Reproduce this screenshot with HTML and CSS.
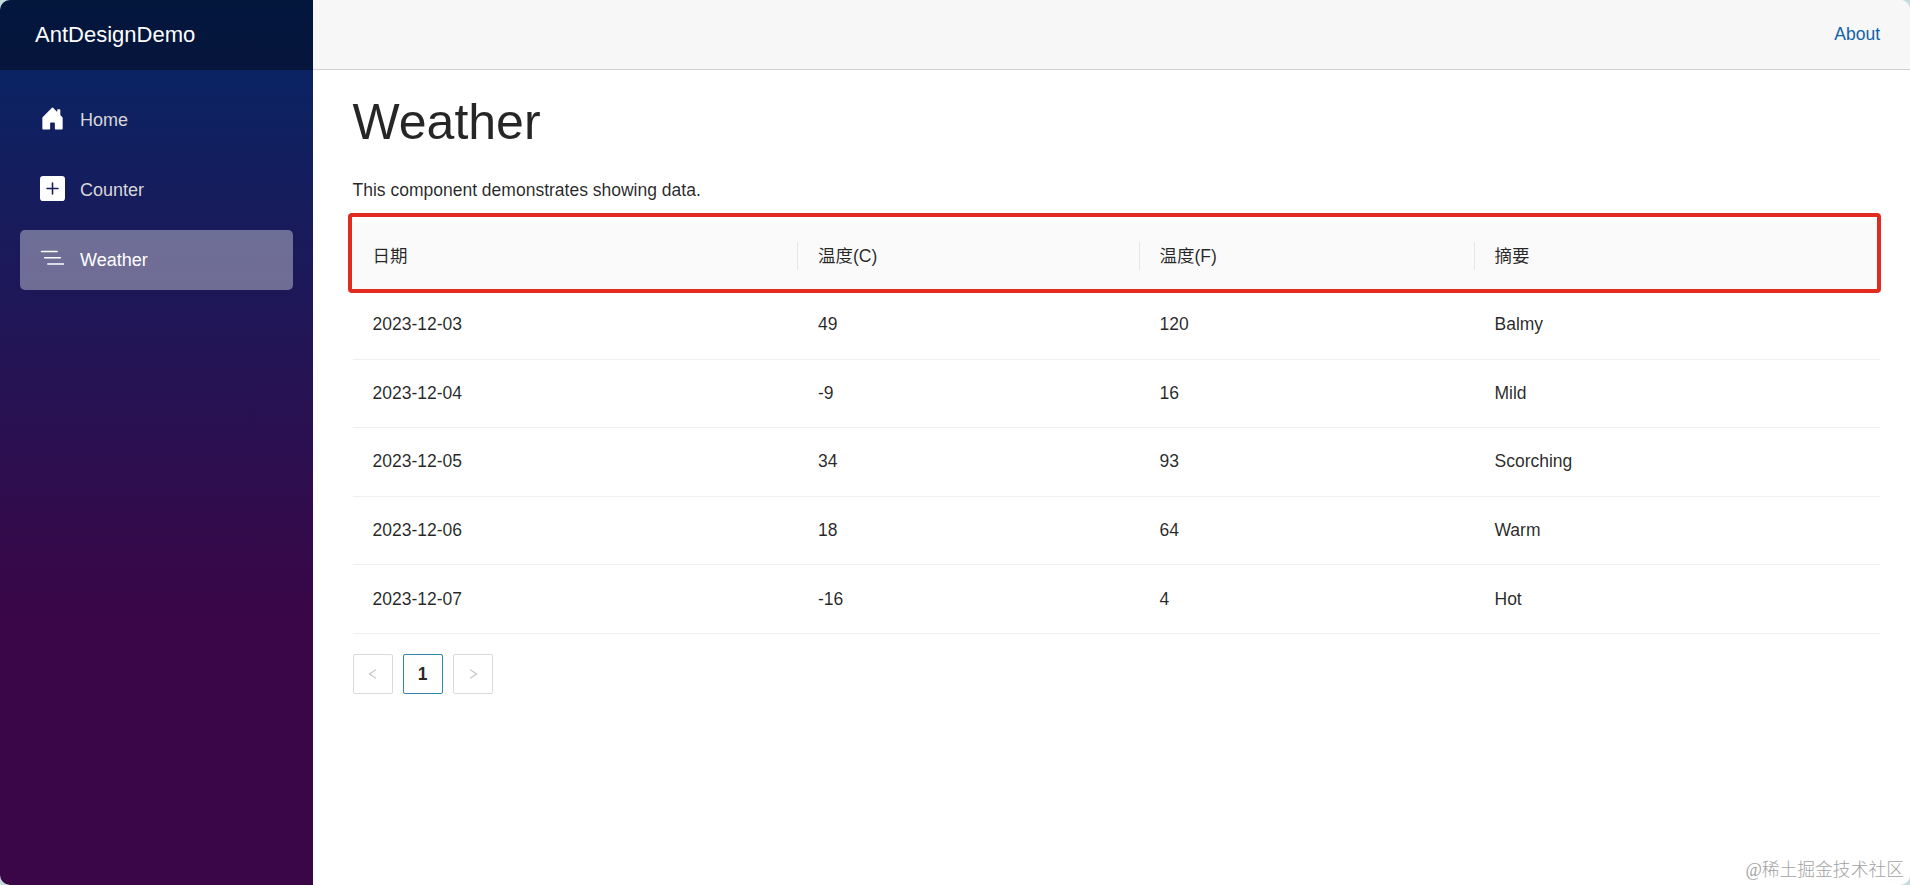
FILE: index.html
```
<!DOCTYPE html>
<html lang="en">
<head>
    <meta charset="UTF-8">
    <meta name="viewport" content="width=device-width, initial-scale=1.0">
    <title>Weather</title>
    <link rel="stylesheet" href="styles.css">
</head>
<body>

    <div class="page">
        <div class="sidebar">
            <div class="navbar-brand">AntDesignDemo</div>
            <nav class="nav-menu">
                <a class="nav-item" href="#">
                    <svg class="nav-icon" viewBox="0 0 16 16" fill="white"><path d="M6.5 14.5v-3.505c0-.245.25-.495.5-.495h2c.25 0 .5.25.5.5v3.5a.5.5 0 0 0 .5.5h4a.5.5 0 0 0 .5-.5v-7a.5.5 0 0 0-.146-.354L13 5.793V2.5a.5.5 0 0 0-.5-.5h-1a.5.5 0 0 0-.5.5v1.293L8.354 1.146a.5.5 0 0 0-.708 0l-6 6A.5.5 0 0 0 1.5 7.5v7a.5.5 0 0 0 .5.5h4a.5.5 0 0 0 .5-.5Z"/></svg>
                    Home
                </a>
                <a class="nav-item" href="#">
                    <svg class="nav-icon" viewBox="0 0 16 16" fill="white"><path d="M2 0a2 2 0 0 0-2 2v12a2 2 0 0 0 2 2h12a2 2 0 0 0 2-2V2a2 2 0 0 0-2-2H2zm6.5 4.5v3h3a.5.5 0 0 1 0 1h-3v3a.5.5 0 0 1-1 0v-3h-3a.5.5 0 0 1 0-1h3v-3a.5.5 0 0 1 1 0z"/></svg>
                    Counter
                </a>
                <a class="nav-item active" href="#">
                    <svg class="nav-icon" viewBox="0 0 16 16" fill="white"><path fill-rule="evenodd" d="M4.5 11.5A.5.5 0 0 1 5 11h10a.5.5 0 0 1 0 1H5a.5.5 0 0 1-.5-.5zm-2-4A.5.5 0 0 1 3 7h10a.5.5 0 0 1 0 1H3a.5.5 0 0 1-.5-.5zm-2-4A.5.5 0 0 1 1 3h10a.5.5 0 0 1 0 1H1a.5.5 0 0 1-.5-.5z"/></svg>
                    Weather
                </a>
            </nav>
        </div>

        <main>
            <div class="top-row">
                <a href="#">About</a>
            </div>

            <article class="content">
                <h1>Weather</h1>
                <p>This component demonstrates showing data.</p>

                <div class="table-wrapper">
                    <table>
                        <colgroup>
                            <col class="col-date">
                            <col class="col-c">
                            <col class="col-f">
                            <col>
                        </colgroup>
                        <thead>
                            <tr><th>日期</th><th>温度(C)</th><th>温度(F)</th><th>摘要</th></tr>
                        </thead>
                        <tbody>
                            <tr><td>2023-12-03</td><td>49</td><td>120</td><td>Balmy</td></tr>
                            <tr><td>2023-12-04</td><td>-9</td><td>16</td><td>Mild</td></tr>
                            <tr><td>2023-12-05</td><td>34</td><td>93</td><td>Scorching</td></tr>
                            <tr><td>2023-12-06</td><td>18</td><td>64</td><td>Warm</td></tr>
                            <tr><td>2023-12-07</td><td>-16</td><td>4</td><td>Hot</td></tr>
                        </tbody>
                    </table>
                    <div class="highlight"></div>
                </div>

                <div class="pagination">
                    <button class="page-btn" disabled>
                        <svg viewBox="0 0 12 12"><path d="M9 1.6 2.4 6 9 10.4"/></svg>
                    </button>
                    <button class="page-btn current">1</button>
                    <button class="page-btn" disabled>
                        <svg viewBox="0 0 12 12"><path d="M3 1.6 9.6 6 3 10.4"/></svg>
                    </button>
                </div>
            </article>
        </main>

        <div class="watermark">@稀土掘金技术社区</div>
    </div>

</body>
</html>
```
FILE: styles.css
```
* {
    box-sizing: border-box;
}

body {
    margin: 0;
    background-color: #c5dcdd;
    color: rgba(0, 0, 0, 0.85);
    font-family: "Liberation Sans", "Noto Sans CJK SC", Arial, sans-serif;
    font-size: 17.5px;
    line-height: 27.5px;
}

.page {
    position: relative;
    display: flex;
    height: 100vh;
    background-color: white;
    border-radius: 10px;
    overflow: hidden;
}

/* Sidebar */
.sidebar {
    width: 313px;
    flex-shrink: 0;
    background-image: linear-gradient(180deg, rgb(5, 39, 103) 0%, #3a0647 70%);
}

.navbar-brand {
    height: 70px;
    padding-left: 35px;
    display: flex;
    align-items: center;
    background-color: rgba(0, 0, 0, 0.4);
    color: white;
    font-size: 22px;
}

.nav-menu {
    display: flex;
    flex-direction: column;
    gap: 10px;
    padding: 20px;
}

.nav-item {
    display: flex;
    align-items: center;
    height: 60px;
    padding: 1px 0 0 20px;
    border-radius: 5px;
    color: #d7d7d7;
    font-size: 18px;
    text-decoration: none;
}

.nav-item.active {
    background-color: rgba(255, 255, 255, 0.37);
    color: white;
}

.nav-icon {
    width: 25px;
    height: 25px;
    margin: 0 15px 4px 0;
}

/* Main area */
main {
    flex: 1;
}

.top-row {
    display: flex;
    justify-content: flex-end;
    align-items: center;
    height: 70px;
    padding-right: 30px;
    background-color: #f7f7f7;
    border-bottom: 1px solid #d1d1d1;
}

.top-row a {
    color: #1061a8;
    font-size: 17.5px;
    text-decoration: none;
}

.content {
    padding: 22px 30px 0 39.5px;
}

h1 {
    margin: 0 0 25px;
    font-size: 50px;
    font-weight: 400;
    line-height: 60px;
}

p {
    margin: 0 0 18px;
}

/* Table */
.table-wrapper {
    position: relative;
}

table {
    width: 100%;
    table-layout: fixed;
    border-collapse: separate;
    border-spacing: 0;
    text-align: left;
}

.col-date {
    width: 445.5px;
}

.col-c {
    width: 341.5px;
}

.col-f {
    width: 335px;
}

th, td {
    height: 68.6px;
    padding: 0 20px;
    border-bottom: 1px solid #f0f0f0;
}

th {
    position: relative;
    background-color: #fafafa;
    font-weight: 400;
}

/* divider between header cells */
th:not(:last-child)::after {
    content: "";
    position: absolute;
    top: 50%;
    right: 0;
    width: 1px;
    height: 28px;
    margin-top: -14px;
    background-color: #e6e6e6;
}

.highlight {
    position: absolute;
    top: -10px;
    left: -4.5px;
    right: -1px;
    height: 80px;
    border: 4px solid #e22b20;
    border-radius: 4px;
}

/* Pagination */
.pagination {
    display: flex;
    gap: 10px;
    margin-top: 20px;
}

.page-btn {
    display: flex;
    align-items: center;
    justify-content: center;
    width: 40px;
    height: 40px;
    padding: 0;
    border: 1px solid #d9d9d9;
    border-radius: 2px;
    background-color: white;
    color: rgba(0, 0, 0, 0.85);
    font-family: inherit;
    font-size: 17.5px;
}

.page-btn.current {
    padding-top: 1px;
    border-color: #3286a8;
    font-weight: bold;
}

.page-btn svg {
    width: 12px;
    height: 12px;
    fill: none;
    stroke: #bfbfbf;
    stroke-width: 1.1;
}

.watermark {
    position: absolute;
    right: 6px;
    bottom: 1px;
    color: #a3a3a3;
    font-family: "Liberation Serif", "Noto Sans CJK SC", serif;
    font-size: 17.8px;
    font-weight: 300;
}
```
